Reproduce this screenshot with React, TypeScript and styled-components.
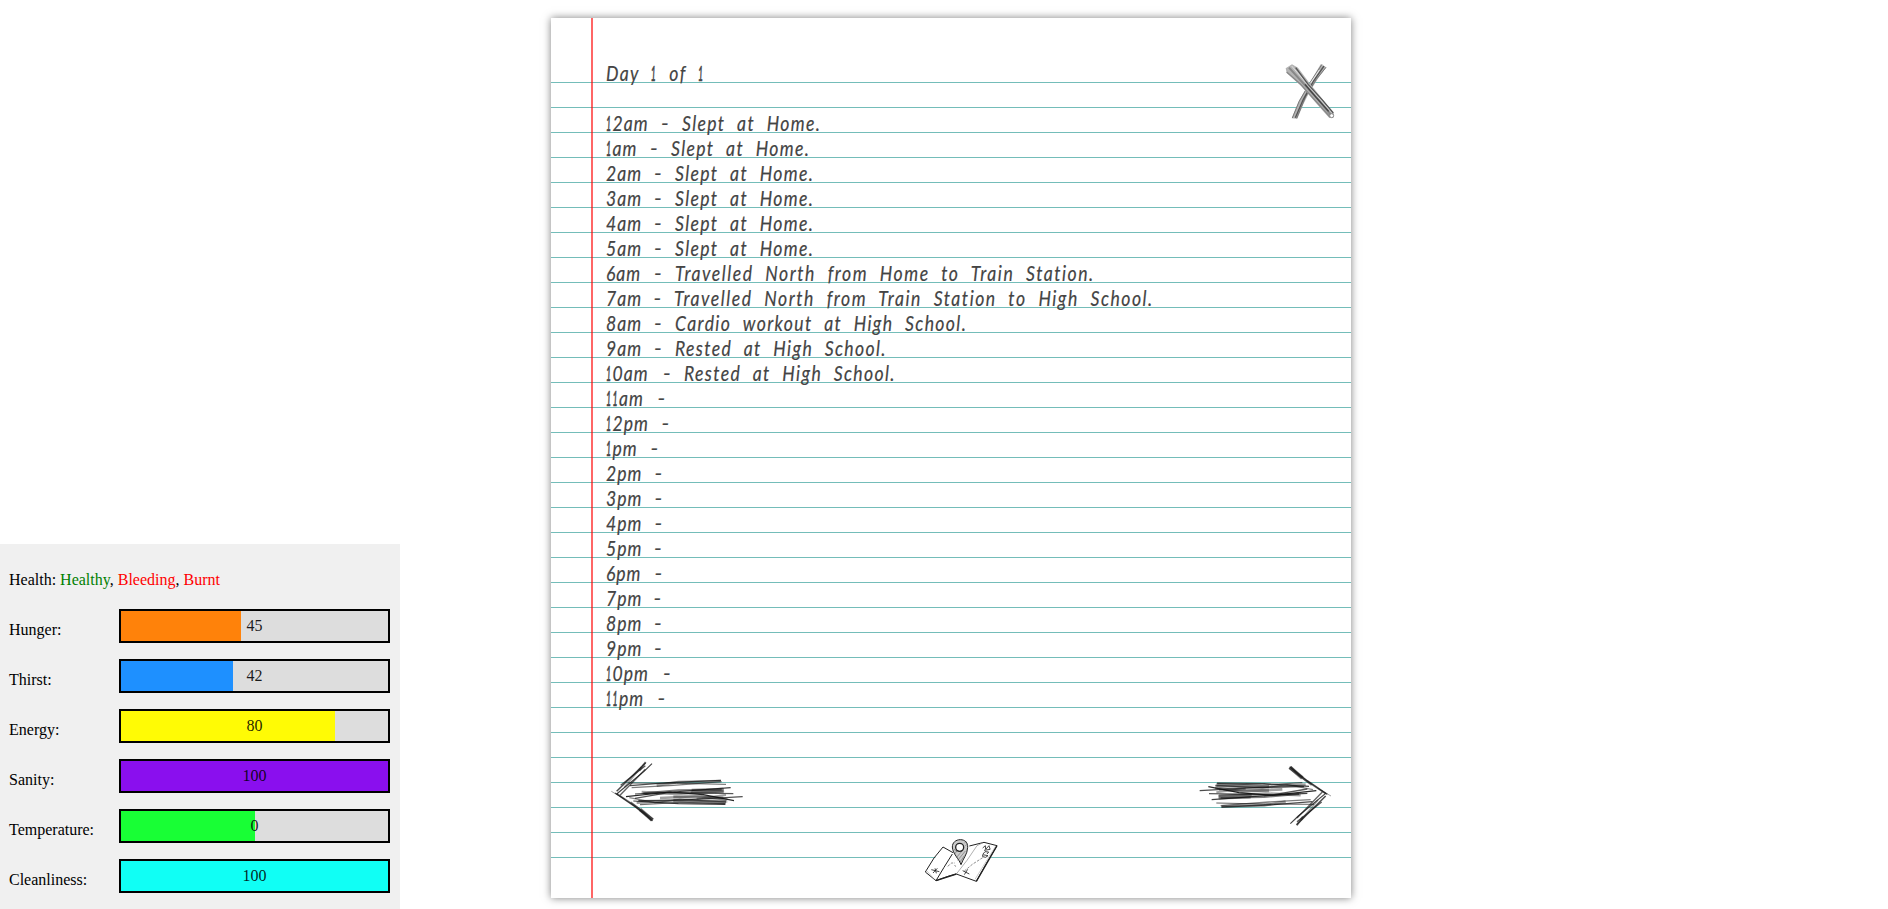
import React from "react";
import styled, { createGlobalStyle } from "styled-components";

const GlobalStyle = createGlobalStyle`
  * { box-sizing: border-box; }
  body { margin: 0; background: #fff; font-family: "Liberation Serif", "Times New Roman", serif; font-size: 16px; color: #000; }
`;

const Page = styled.div`
  display: flex;
  height: 909px;
  overflow: hidden;
`;

const StatsPanel = styled.aside`
  flex: none;
  align-self: flex-end;
  width: 400px;
  height: 365px;
  padding: 20px 10px 0 9px;
  background: #f0f0f0;
`;

const Health = styled.p`
  margin: 0;
  height: 45px;
  line-height: 31px;
`;

const Condition = styled.span<{ $good?: boolean }>`
  color: ${(p) => (p.$good ? "green" : "red")};
`;

const StatRow = styled.div`
  display: flex;
  height: 34px;
  margin-bottom: 16px;
`;

const StatLabel = styled.span`
  width: 110px;
  line-height: 41px;
`;

const Track = styled.div`
  display: grid;
  width: 271px;
  height: 34px;
  border: 2px solid #000;
  background: #ddd;
`;

const Fill = styled.div<{ $color: string }>`
  grid-area: 1 / 1;
  background: ${(p) => p.$color};
`;

const Value = styled.span`
  grid-area: 1 / 1;
  text-align: center;
  line-height: 30px;
  color: rgba(0, 0, 0, 0.88);
`;

const Paper = styled.main`
  position: relative;
  flex: none;
  width: 800px;
  height: 880px;
  margin: 18px 0 0 151px;
  padding-top: 39px;
  background:
    linear-gradient(rgba(255, 0, 0, 0.6), rgba(255, 0, 0, 0.6)) 40px 0 / 2px 100% no-repeat,
    repeating-linear-gradient(#74bdb9 0 1px, transparent 1px 25px) 0 64px / 100% 800px no-repeat,
    #fff;
  box-shadow: 0 0 8px rgba(0, 0, 0, 0.5);
`;

const Journal = styled.div`
  height: 650px;
  padding-left: 55px;
  font-family: Lato, sans-serif;
  font-style: italic;
  font-size: 22px;
  color: #444;
  -webkit-text-stroke: 0.2px #444;
  white-space: nowrap;
`;

const Heading = styled.h1`
  margin: 0 0 25px;
  width: 300px;
  height: 25px;
  line-height: 32px;
  font-size: inherit;
  font-weight: 400;
  letter-spacing: 1.7px;
  word-spacing: 7.7px;
  transform: scaleX(0.8);
  transform-origin: left;
`;

const Entry = styled.div`
  display: flex;
  height: 25px;
  line-height: 32px;
`;

const Hour = styled.span<{ $width: number }>`
  flex: none;
  width: ${(p) => p.$width}px;
  letter-spacing: 1.2px;
  transform: scaleX(0.8);
  transform-origin: left;
`;

/* The numeral one is condensed to little more than its stem */
const NarrowOne = styled.span`
  display: inline-block;
  width: 8.2px;
  letter-spacing: 0;
  -webkit-text-stroke: 0.7px #444;
  transform: scaleX(0.5);
  transform-origin: left;
`;

const Dash = styled.span`
  width: 20.5px;
`;

const Activity = styled.span<{ $loose: boolean }>`
  letter-spacing: ${(p) => (p.$loose ? 1.9 : 1.7)}px;
  word-spacing: 7.7px;
  transform: scaleX(0.8);
  transform-origin: left;
`;

const CloseButton = styled.svg`
  position: absolute;
  left: 719px;
  top: 32px;
  width: 90px;
  height: 80px;
`;

const Pager = styled.nav`
  display: flex;
  justify-content: space-between;
  margin-top: 43px;
  padding: 0 1px 0 49px;
`;

const ArrowSvg = styled.svg`
  width: 160px;
  height: 80px;
`;

const MapSvg = styled.svg`
  display: block;
  width: 90px;
  height: 60px;
  margin-left: 364px;
`;

const stats = [
  { label: "Hunger:", value: 45, fill: 45, color: "#ff820a" },
  { label: "Thirst:", value: 42, fill: 42, color: "#1e90ff" },
  { label: "Energy:", value: 80, fill: 80, color: "#fffb05" },
  { label: "Sanity:", value: 100, fill: 100, color: "#8a0fee" },
  { label: "Temperature:", value: 0, fill: 50, color: "#18ff35" },
  { label: "Cleanliness:", value: 100, fill: 100, color: "#10fff5" },
];

const slept = "Slept at Home.";
const entries: [string, number, string?][] = [
  ["12am", 55, slept],
  ["1am", 44, slept],
  ["2am", 48, slept],
  ["3am", 48, slept],
  ["4am", 48, slept],
  ["5am", 48, slept],
  ["6am", 48, "Travelled North from Home to Train Station."],
  ["7am", 47.5, "Travelled North from Train Station to High School."],
  ["8am", 48, "Cardio workout at High School."],
  ["9am", 48, "Rested at High School."],
  ["10am", 57, "Rested at High School."],
  ["11am", 51.5],
  ["12pm", 55.5],
  ["1pm", 44.5],
  ["2pm", 48.5],
  ["3pm", 48.5],
  ["4pm", 48.5],
  ["5pm", 48],
  ["6pm", 48.5],
  ["7pm", 47.5],
  ["8pm", 48],
  ["9pm", 48],
  ["10pm", 57],
  ["11pm", 51.5],
];

const Numerals = ({ text }: { text: string }) => (
  <>
    {text.split("").map((ch, i) => (ch === "1" ? <NarrowOne key={i}>1</NarrowOne> : ch))}
  </>
);

/* Pencil strokes: path, width, opacity */
const arrowStrokes: [string, number, number][] = [
  ["M50 124L137 38", 4.5, 0.75],
  ["M62 106L136 47", 4, 0.7],
  ["M50 132L132 64L156 41", 3.5, 0.8],
  ["M60 136L136 58", 4, 0.65],
  ["M73 112L124 51", 5, 0.4],
  ["M118 62L137 36", 6, 0.5],
  ["M34 124L74 147", 3, 0.4],
  ["M45 129L105 170L158 212", 4, 0.7],
  ["M50 131L110 171L160 208", 5, 0.55],
  ["M92 157L132 188L155 212", 6, 0.5],
  ["M120 178L157 210", 11, 0.55],
  ["M90 107L205 98L363 91", 4, 0.75],
  ["M95 113L220 106L365 95", 4, 0.55],
  ["M85 99L230 100L378 103", 2.5, 0.8],
  ["M170 107L235 96L362 93", 8, 0.4],
  ["M105 132L220 126L392 113", 3.5, 0.8],
  ["M125 127L230 131L370 123", 9, 0.38],
  ["M130 130L235 121L365 119", 6, 0.55],
  ["M78 140L210 126L310 134L402 152", 3.5, 0.9],
  ["M105 145L205 128L400 131", 4, 0.7],
  ["M115 152L250 150L428 140", 3.5, 0.75],
  ["M180 144L300 138L382 149", 8, 0.4],
  ["M110 158L240 150L378 154", 8, 0.42],
  ["M220 152L378 158", 10, 0.4],
  ["M220 140L370 144", 9, 0.35],
  ["M100 153L235 161L376 163", 3.5, 0.8],
  ["M120 164L240 157L375 161", 3.5, 0.6],
  ["M88 143L165 158L240 148L382 156", 3.5, 0.5],
  ["M275 120L368 117L369 125L272 128", 7, 0.45],
  ["M290 146L378 135", 6, 0.4],
];

const Arrow = ({ right }: { right?: boolean }) => (
  <ArrowSvg viewBox="0 0 480 240" fill="none" stroke="#111" strokeLinejoin="round">
    <g transform={right ? "translate(457 262) rotate(180)" : undefined}>
      {arrowStrokes.map(([d, w, o], i) => (
        <path key={i} d={d} strokeWidth={w} opacity={o} />
      ))}
    </g>
  </ArrowSvg>
);

const CloseIcon = () => (
  <CloseButton viewBox="0 0 270 240" fill="none">
    <path d="M152 43L129 82L108 116L88 150L65 205L82 206L100 163L119 125L145 84L169 52Z" fill="#b4b4b4" />
    <path d="M156 43L120 98L87 155L67 204M168 52L139 88L107 140L80 205" stroke="#777" strokeWidth="3" />
    <path d="M162 48L130 94L100 148L76 203" stroke="#222" strokeWidth="4" opacity=".65" />
    <path d="M148 60L122 99" stroke="#eee" strokeWidth="3" />
    <path d="M47 55L66 43L84 53L120 101L158 148L192 191L190 204L178 204L140 161L96 110L50 69Z" fill="#b4b4b4" />
    <path d="M50 66L91 102L137 153L180 201" stroke="#888" strokeWidth="4" />
    <path d="M57 53L99 99L143 147L183 195" stroke="#888" strokeWidth="6" />
    <path d="M65 48L106 96L151 148L187 189" stroke="#ddd" strokeWidth="3" />
    <path d="M77 53L115 104L158 151L190 189" stroke="#555" strokeWidth="4" />
    <path d="M105 103L139 143L176 184" stroke="#222" strokeWidth="4" opacity=".7" />
    <circle cx="185" cy="197" r="6" fill="#fff" stroke="#888" strokeWidth="3" />
  </CloseButton>
);

const MapIcon = () => (
  <MapSvg viewBox="0 0 270 180" fill="none" stroke="#222" strokeWidth="3" strokeLinejoin="round">
    <path d="M84 51L31 126L63 152L124 132L184 154L246 47L207 37L163 48L113 67Z" fill="#fff" stroke="none" />
    <path d="M114 68L84 51L57 84L31 126L63 152L99 139L124 132L184 154L215 99L246 47L207 37L163 48" />
    <path d="M184 154L246 47M63 152L124 132" strokeWidth="4" />
    <path d="M63 152L87 112L112 72" />
    <path d="M124 132L156 91L186 47L204 38" stroke="#888" strokeWidth="2" />
    <path d="M34 121L59 149M180 148L242 48" stroke="#999" strokeWidth="1.5" />
    <path d="M148 123L172 103L203 83M98 109L110 99L120 99M119 105L122 110" stroke="#555" strokeWidth="2" strokeDasharray="8 4" />
    <path d="M49 119L73 125M54 129L67 115M60 115L64 130M143 122L163 132M148 134L158 118" strokeWidth="2.5" />
    <path d="M203 54L211 47L212 58L222 47L225 57M207 61L226 58M204 72L210 65L221 66L216 72M203 74L219 77L212 82L203 80Z" strokeWidth="2.5" />
    <path d="M138 104C132 86 113 72 112 51C112 38 122 29 136 29C150 29 159 38 158 52C157 74 145 84 138 104Z" fill="#ccc" />
    <path d="M119 72L127 61M124 83L142 62M128 91L151 63M134 98L148 77M151 48L157 42M148 40L154 34M117 57L124 65" stroke="#555" strokeWidth="1.5" />
    <circle cx="134" cy="52" r="12" fill="#fff" strokeWidth="4" />
  </MapSvg>
);

export default function App() {
  return (
    <Page>
      <GlobalStyle />
      <StatsPanel>
        <Health>
          Health: <Condition $good>Healthy</Condition>, <Condition>Bleeding</Condition>, <Condition>Burnt</Condition>
        </Health>
        {stats.map((s) => (
          <StatRow key={s.label}>
            <StatLabel>{s.label}</StatLabel>
            <Track>
              <Fill $color={s.color} style={{ width: `${s.fill}%` }} />
              <Value>{s.value}</Value>
            </Track>
          </StatRow>
        ))}
      </StatsPanel>
      <Paper>
        <Journal>
          <Heading>
            <Numerals text="Day 1 of 1" />
          </Heading>
          {entries.map(([hour, width, text]) => (
            <Entry key={hour}>
              <Hour $width={width}>
                <Numerals text={hour} />
              </Hour>
              <Dash>-</Dash>
              {text && <Activity $loose={text.startsWith("Travelled")}>{text}</Activity>}
            </Entry>
          ))}
        </Journal>
        <CloseIcon />
        <Pager>
          <Arrow />
          <Arrow right />
        </Pager>
        <MapIcon />
      </Paper>
    </Page>
  );
}
